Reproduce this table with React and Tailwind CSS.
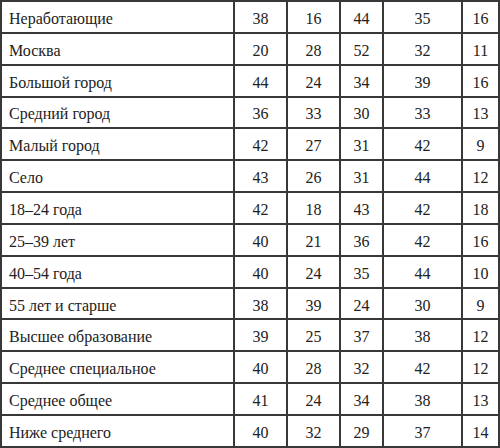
const rows = [
  ["Неработающие", 38, 16, 44, 35, 16],
  ["Москва", 20, 28, 52, 32, 11],
  ["Большой город", 44, 24, 34, 39, 16],
  ["Средний город", 36, 33, 30, 33, 13],
  ["Малый город", 42, 27, 31, 42, 9],
  ["Село", 43, 26, 31, 44, 12],
  ["18–24 года", 42, 18, 43, 42, 18],
  ["25–39 лет", 40, 21, 36, 42, 16],
  ["40–54 года", 40, 24, 35, 44, 10],
  ["55 лет и старше", 38, 39, 24, 30, 9],
  ["Высшее образование", 39, 25, 37, 38, 12],
  ["Среднее специальное", 40, 28, 32, 42, 12],
  ["Среднее общее", 41, 24, 34, 38, 13],
  ["Ниже среднего", 40, 32, 29, 37, 14],
];

export default function App() {
  return (
    <div className="w-[500px] h-[448px] bg-white overflow-hidden font-['Liberation_Serif',serif]">
      <div className="grid grid-cols-[233px_53px_53px_43px_79px_37px] border-l-2 border-t-2 border-[#383838] text-[16px] text-[#222222]">
        {rows.map((r, i) => (
          <div key={i} className="contents">
            <div className="h-[31.85px] border-r-2 border-b-2 border-[#383838] flex items-center pl-[7px] pt-[4px]">
              {r[0]}
            </div>
            {r.slice(1).map((v, j) => (
              <div
                key={j}
                className="h-[31.85px] border-r-2 border-b-2 border-[#383838] flex items-center justify-center pt-[4px]"
              >
                {v}
              </div>
            ))}
          </div>
        ))}
      </div>
    </div>
  );
}
